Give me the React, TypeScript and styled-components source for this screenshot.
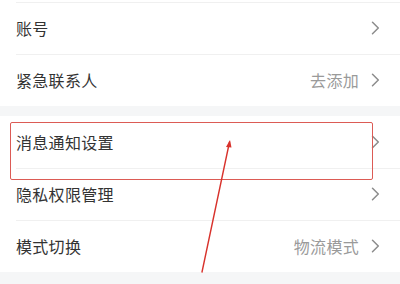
import React from "react";
import styled, { createGlobalStyle } from "styled-components";

const Global = createGlobalStyle`
  html, body { margin: 0; padding: 0; background: #f5f6f7; }
  body { font-family: "Noto Sans CJK SC", "Noto Sans", sans-serif; }
`;

const Page = styled.div`
  position: relative;
  width: 400px;
  height: 284px;
  overflow: hidden;
  background: #f5f6f7;
  display: flex;
  flex-direction: column;
  gap: 10px;
`;

const Group = styled.div<{ $padTop?: number }>`
  background: #ffffff;
  padding-top: ${(p) => p.$padTop ?? 0}px;
  display: flex;
  flex-direction: column;
`;

const Row = styled.div<{ $divider?: boolean }>`
  position: relative;
  height: 52px;
  display: flex;
  align-items: center;
  padding: 0 20px 0 16px;
  box-sizing: border-box;
  &::before {
    content: "";
    display: ${(p) => (p.$divider ? "block" : "none")};
    position: absolute;
    top: 0;
    left: 16px;
    right: 0;
    height: 1px;
    background: #f0f0f0;
  }
`;

const Label = styled.span`
  flex: 1;
  font-size: 16px;
  color: #333333;
  letter-spacing: 0.3px;
`;

const Value = styled.span`
  font-size: 16px;
  color: #9a9a9a;
  margin-right: 12px;
  letter-spacing: 0.3px;
`;

const Chevron = () => (
  <svg width="9" height="14" viewBox="0 0 9 14" fill="none">
    <path d="M1.5 1.2 L7.3 7 L1.5 12.8" stroke="#8c8c8c" strokeWidth="1.5" strokeLinecap="round" strokeLinejoin="round" />
  </svg>
);

const Highlight = styled.div`
  position: absolute;
  left: 10px;
  top: 122px;
  width: 363px;
  height: 58px;
  box-sizing: border-box;
  border: 1.5px solid #dc5b55;
  border-radius: 2px;
  pointer-events: none;
`;

const ArrowLayer = styled.svg`
  position: absolute;
  left: 0;
  top: 0;
  pointer-events: none;
`;

const items1 = [
  { label: "账号", value: "" },
  { label: "紧急联系人", value: "去添加" },
];
const items2 = [
  { label: "消息通知设置", value: "" },
  { label: "隐私权限管理", value: "" },
  { label: "模式切换", value: "物流模式" },
];

export default function App() {
  return (
    <>
      <Global />
      <Page>
        <Group $padTop={2}>
          {items1.map((it) => (
            <Row key={it.label} $divider>
              <Label>{it.label}</Label>
              {it.value && <Value>{it.value}</Value>}
              <Chevron />
            </Row>
          ))}
        </Group>
        <Group>
          {items2.map((it, i) => (
            <Row key={it.label} $divider={i > 0}>
              <Label>{it.label}</Label>
              {it.value && <Value>{it.value}</Value>}
              <Chevron />
            </Row>
          ))}
        </Group>
        <Highlight />
        <ArrowLayer width="400" height="284" viewBox="0 0 400 284">
          <path d="M202 272 L229.5 142" stroke="#d8322c" strokeWidth="1.4" strokeLinecap="round" />
          <path d="M230 140 L226 147 L231.5 147.5 Z" fill="#d8322c" />
        </ArrowLayer>
      </Page>
    </>
  );
}
